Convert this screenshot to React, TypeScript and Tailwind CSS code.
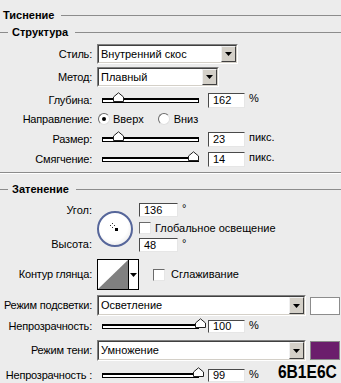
import React from "react";

const sunken =
  "border border-t-[#808080] border-l-[#808080] border-r-white border-b-white";

function Label({ children }: { children: React.ReactNode }) {
  return (
    <div className="flex w-[92px] shrink-0 justify-end whitespace-nowrap tracking-[-0.2px]">
      {children}
    </div>
  );
}

function Header({ title, lead }: { title: string; lead?: boolean }) {
  return (
    <div className="flex h-[14px] items-center">
      {lead && <div className="mr-[4px] w-[8px] border-t border-[#8c8c8c]" />}
      <span className={`font-bold ${lead ? "" : "ml-[3px]"}`}>{title}</span>
      <div className="ml-[7px] flex-1 border-t border-[#8c8c8c]" />
    </div>
  );
}

function Arrow() {
  return (
    <svg width="7" height="4" viewBox="0 0 7 4">
      <path d="M0 0H7L3.5 4Z" fill="#000" />
    </svg>
  );
}

function Select({ value, className }: { value: string; className: string }) {
  return (
    <div className={`ml-[5px] flex h-full ${sunken} ${className}`}>
      <div className="flex flex-1 items-center border border-t-[#404040] border-l-[#404040] border-r-[#d4d0c8] border-b-[#d4d0c8] bg-white">
        <span className="pl-[2px]">{value}</span>
        <div className="ml-auto flex h-full w-[15px] items-center justify-center border border-t-[#f0f0f0] border-l-[#f0f0f0] border-r-[#404040] border-b-[#404040] bg-[#d4d0c8]">
          <Arrow />
        </div>
      </div>
    </div>
  );
}

function Field({ value, className = "w-[37px] h-[15px]" }: { value: string; className?: string }) {
  return (
    <div
      className={`flex items-center border border-t-[#4a4a4a] border-l-[#4a4a4a] border-r-[#e6e6e6] border-b-[#e6e6e6] bg-white pl-[4px] leading-none ${className}`}
    >
      {value}
    </div>
  );
}

function Slider({ pos }: { pos: number }) {
  return (
    <div className="relative ml-[10px] h-[5px] w-[97px] shrink-0 border border-t-2 border-black bg-white">
      <svg
        className="absolute -top-[8px]"
        style={{ left: pos - 6 }}
        width="11"
        height="10"
        viewBox="0 0 11 10"
      >
        <path d="M0.5 9.5V5L5.5 0.8L10.5 5V9.5Z" fill="#fff" stroke="#222" />
      </svg>
    </div>
  );
}

function Radio({ checked }: { checked?: boolean }) {
  return (
    <span className="flex h-[12px] w-[12px] items-center justify-center rounded-full border border-t-[#6a6a6a] border-l-[#6a6a6a] border-r-[#e0e0e0] border-b-[#e0e0e0] bg-white">
      {checked && <span className="h-[4px] w-[4px] rounded-full bg-black" />}
    </span>
  );
}

function Check() {
  return (
    <span className="block h-[12px] w-[12px] border border-t-[#6a6a6a] border-l-[#6a6a6a] border-r-[#e6e6e6] border-b-[#e6e6e6] bg-white" />
  );
}

function Unit({ children }: { children: React.ReactNode }) {
  return <span className="ml-[4px] self-start leading-[10px]">{children}</span>;
}

export default function App() {
  return (
    <div className="flex h-[383px] w-[341px] flex-col overflow-hidden bg-[#ececec] font-['Liberation_Sans',Tahoma,sans-serif] text-[11px] text-black">
      <div className="mt-[8px]">
        <Header title="Тиснение" />
      </div>
      <div className="mt-[3px]">
        <Header title="Структура" lead />
      </div>

      <div className="mt-[5px] flex h-[20px] items-center">
        <Label>Стиль:</Label>
        <Select value="Внутренний скос" className="w-[141px]" />
      </div>
      <div className="mt-[3px] flex h-[20px] items-center">
        <Label>Метод:</Label>
        <Select value="Плавный" className="w-[122px]" />
      </div>
      <div className="mt-[5px] flex h-[16px] items-center">
        <Label>Глубина:</Label>
        <Slider pos={16} />
        <div className="ml-[9px] flex">
          <Field value="162" />
          <Unit>%</Unit>
        </div>
      </div>
      <div className="mt-[4px] flex h-[14px] items-center">
        <Label>Направление:</Label>
        <div className="ml-[6px] flex items-center">
          <Radio checked />
          <span className="ml-[3px]">Вверх</span>
          <span className="ml-[14px]">
            <Radio />
          </span>
          <span className="ml-[4px]">Вниз</span>
        </div>
      </div>
      <div className="mt-[6px] flex h-[15px] items-center">
        <Label>Размер:</Label>
        <Slider pos={16} />
        <div className="ml-[9px] flex">
          <Field value="23" />
          <Unit>пикс.</Unit>
        </div>
      </div>
      <div className="mt-[5px] flex h-[15px] items-center">
        <Label>Смягчение:</Label>
        <Slider pos={91} />
        <div className="ml-[9px] flex">
          <Field value="14" />
          <Unit>пикс.</Unit>
        </div>
      </div>

      <div className="mt-[5px] border-t border-b border-t-[#8c8c8c] border-b-white" />

      <div className="mt-[8px]">
        <Header title="Затенение" lead />
      </div>

      <div className="mt-[7px] flex h-[49px]">
        <div className="flex w-[92px] shrink-0 flex-col justify-between pb-[1px] text-right">
          <div className="flex h-[14px] items-center justify-end">Угол:</div>
          <div className="flex h-[14px] items-center justify-end">Высота:</div>
        </div>
        <div className="relative ml-[5px] mt-[8px] h-[36px] w-[36px] rounded-full border-2 border-[#56669a] bg-[radial-gradient(circle_at_45%_40%,#ffffff_55%,#dcdcdc)]">
          <svg className="absolute left-0 top-0" width="32" height="32" viewBox="0 0 32 32">
            <rect x="13" y="10" width="1" height="1" fill="#333" />
            <rect x="13" y="14" width="1" height="1" fill="#333" />
            <rect x="11" y="12" width="1" height="1" fill="#333" />
            <rect x="15" y="12" width="1" height="1" fill="#333" />
            <rect x="16" y="15" width="3" height="3" fill="#000" />
          </svg>
        </div>
        <div className="ml-[6px] flex flex-col">
          <div className="flex">
            <Field value="136" className="h-[14px] w-[39px]" />
            <Unit>°</Unit>
          </div>
          <div className="mt-[5px] flex h-[12px] items-center">
            <Check />
            <span className="ml-[4px]">Глобальное освещение</span>
          </div>
          <div className="mt-[4px] flex">
            <Field value="48" className="h-[14px] w-[39px]" />
            <Unit>°</Unit>
          </div>
        </div>
      </div>

      <div className="mt-[7px] flex h-[31px] items-center">
        <Label>Контур глянца:</Label>
        <div className="ml-[5px] flex h-[31px] w-[42px] border border-black bg-white">
          <svg width="30" height="29" viewBox="0 0 30 29" className="block">
            <path d="M30 0V29H0Z" fill="#808080" />
          </svg>
          <div className="flex flex-1 items-center justify-center border-l border-black">
            <Arrow />
          </div>
        </div>
        <span className="ml-[14px]">
          <Check />
        </span>
        <span className="ml-[6px]">Сглаживание</span>
      </div>

      <div className="mt-[5px] flex h-[21px] items-center">
        <Label>Режим подсветки:</Label>
        <Select value="Осветление" className="w-[209px]" />
        <div className="ml-[4px] h-[18px] w-[30px] border border-[#8c8c8c] bg-white" />
      </div>
      <div className="mt-[3px] flex h-[14px] items-center">
        <Label>Непрозрачность:</Label>
        <Slider pos={98} />
        <div className="ml-[9px] flex">
          <Field value="100" className="h-[13px] w-[37px]" />
          <Unit>%</Unit>
        </div>
      </div>
      <div className="mt-[7px] flex h-[21px] items-center">
        <Label>Режим тени:</Label>
        <Select value="Умножение" className="w-[209px]" />
        <div className="ml-[4px] h-[19px] w-[30px] border border-[#8c8c8c] bg-[#6b1e6c]" />
      </div>
      <div className="mt-[7px] flex h-[14px] items-center">
        <Label>Непрозрачность :</Label>
        <Slider pos={96} />
        <div className="ml-[9px] flex">
          <Field value="99" className="h-[13px] w-[37px]" />
          <Unit>%</Unit>
        </div>
        <span className="-mt-[4px] ml-auto mr-[4px] origin-right scale-x-[0.82] self-start text-[19px] font-bold leading-[16px]">
          6B1E6C
        </span>
      </div>
    </div>
  );
}
